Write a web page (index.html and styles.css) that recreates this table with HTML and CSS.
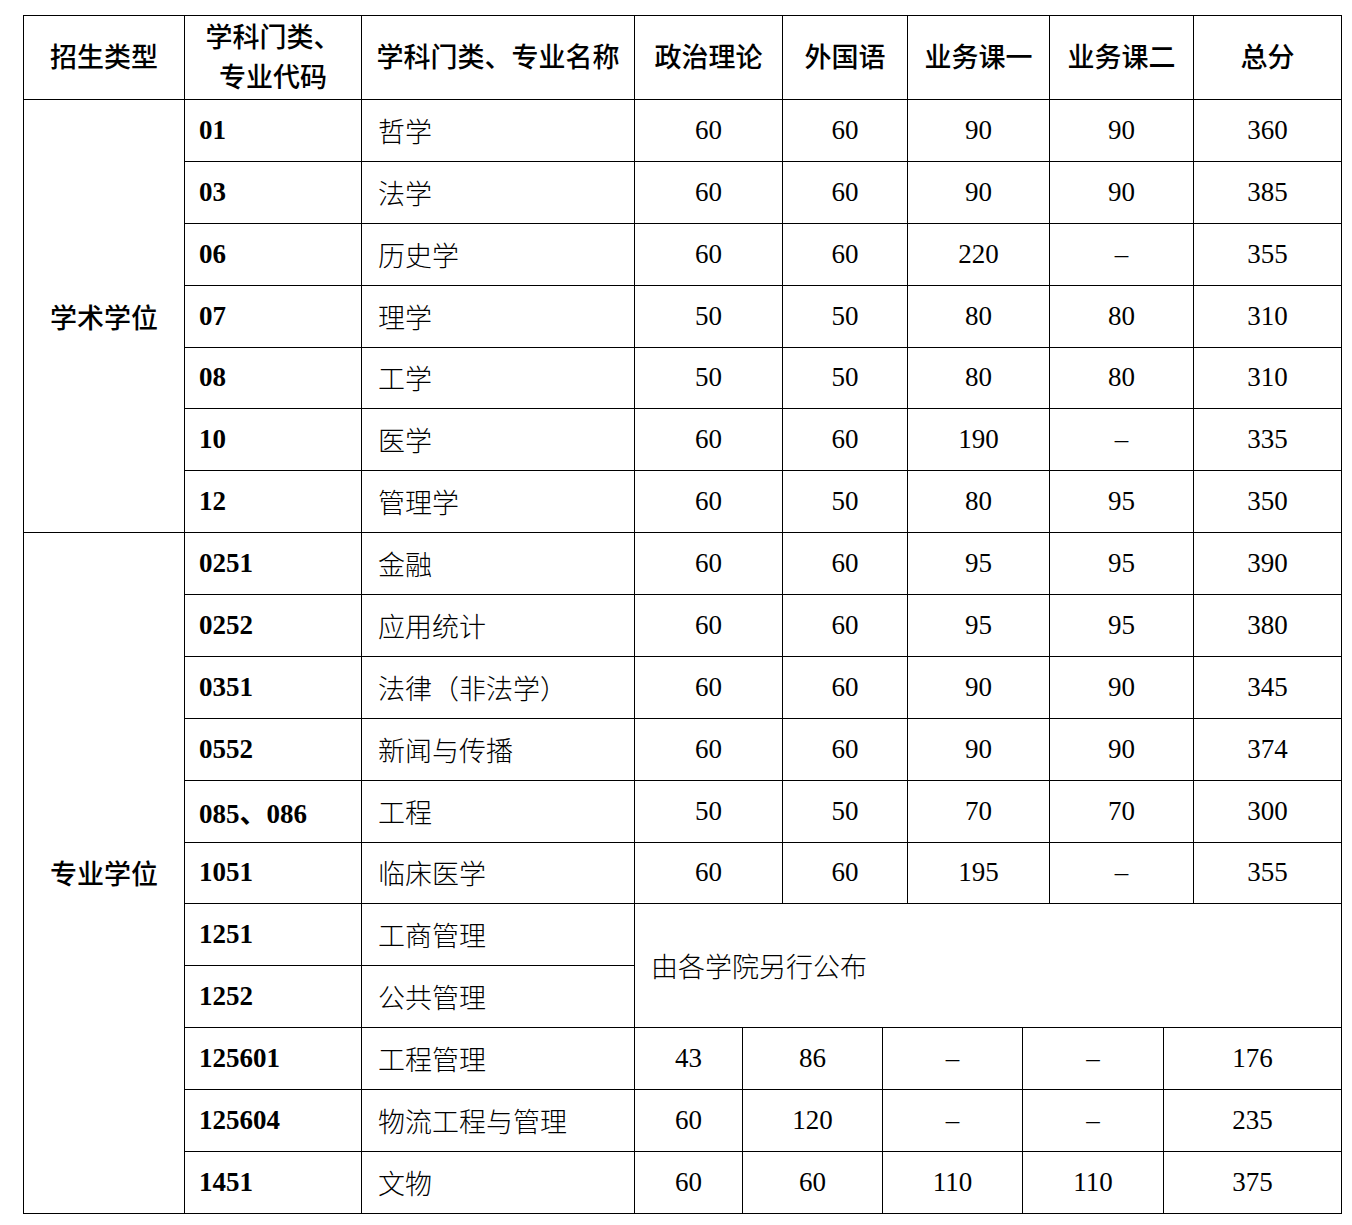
FILE: index.html
```html
<!DOCTYPE html>
<html lang="zh-CN">
<head>
<meta charset="utf-8">
<title>分数线</title>
<link rel="stylesheet" href="styles.css">
</head>
<body>
<table class="score">
  <colgroup>
    <col class="c1"><col class="c2"><col class="c3"><col class="c4"><col class="c5"><col class="c6">
    <col class="c7"><col class="c8"><col class="c9"><col class="c10"><col class="c11"><col class="c12">
  </colgroup>
  <thead>
    <tr class="head">
      <th>招生类型</th>
      <th class="two">学科门类、<br>专业代码</th>
      <th>学科门类、专业名称</th>
      <th colspan="2">政治理论</th>
      <th colspan="2">外国语</th>
      <th colspan="2">业务课一</th>
      <th colspan="2">业务课二</th>
      <th>总分</th>
    </tr>
  </thead>
  <tbody>
    <tr><td class="type" rowspan="7">学术学位</td><td class="code">01</td><td class="name">哲学</td><td colspan="2">60</td><td colspan="2">60</td><td colspan="2">90</td><td colspan="2">90</td><td>360</td></tr>
    <tr><td class="code">03</td><td class="name">法学</td><td colspan="2">60</td><td colspan="2">60</td><td colspan="2">90</td><td colspan="2">90</td><td>385</td></tr>
    <tr><td class="code">06</td><td class="name">历史学</td><td colspan="2">60</td><td colspan="2">60</td><td colspan="2">220</td><td colspan="2">–</td><td>355</td></tr>
    <tr><td class="code">07</td><td class="name">理学</td><td colspan="2">50</td><td colspan="2">50</td><td colspan="2">80</td><td colspan="2">80</td><td>310</td></tr>
    <tr><td class="code">08</td><td class="name">工学</td><td colspan="2">50</td><td colspan="2">50</td><td colspan="2">80</td><td colspan="2">80</td><td>310</td></tr>
    <tr><td class="code">10</td><td class="name">医学</td><td colspan="2">60</td><td colspan="2">60</td><td colspan="2">190</td><td colspan="2">–</td><td>335</td></tr>
    <tr><td class="code">12</td><td class="name">管理学</td><td colspan="2">60</td><td colspan="2">50</td><td colspan="2">80</td><td colspan="2">95</td><td>350</td></tr>
    <tr><td class="type" rowspan="11">专业学位</td><td class="code">0251</td><td class="name">金融</td><td colspan="2">60</td><td colspan="2">60</td><td colspan="2">95</td><td colspan="2">95</td><td>390</td></tr>
    <tr><td class="code">0252</td><td class="name">应用统计</td><td colspan="2">60</td><td colspan="2">60</td><td colspan="2">95</td><td colspan="2">95</td><td>380</td></tr>
    <tr><td class="code">0351</td><td class="name">法律（非法学）</td><td colspan="2">60</td><td colspan="2">60</td><td colspan="2">90</td><td colspan="2">90</td><td>345</td></tr>
    <tr><td class="code">0552</td><td class="name">新闻与传播</td><td colspan="2">60</td><td colspan="2">60</td><td colspan="2">90</td><td colspan="2">90</td><td>374</td></tr>
    <tr><td class="code">085、086</td><td class="name">工程</td><td colspan="2">50</td><td colspan="2">50</td><td colspan="2">70</td><td colspan="2">70</td><td>300</td></tr>
    <tr><td class="code">1051</td><td class="name">临床医学</td><td colspan="2">60</td><td colspan="2">60</td><td colspan="2">195</td><td colspan="2">–</td><td>355</td></tr>
    <tr><td class="code">1251</td><td class="name">工商管理</td><td class="note" colspan="9" rowspan="2">由各学院另行公布</td></tr>
    <tr><td class="code">1252</td><td class="name">公共管理</td></tr>
    <tr><td class="code">125601</td><td class="name">工程管理</td><td>43</td><td colspan="2">86</td><td colspan="2">–</td><td colspan="2">–</td><td colspan="2">176</td></tr>
    <tr><td class="code">125604</td><td class="name">物流工程与管理</td><td>60</td><td colspan="2">120</td><td colspan="2">–</td><td colspan="2">–</td><td colspan="2">235</td></tr>
    <tr><td class="code">1451</td><td class="name">文物</td><td>60</td><td colspan="2">60</td><td colspan="2">110</td><td colspan="2">110</td><td colspan="2">375</td></tr>
  </tbody>
</table>
</body>
</html>
```
FILE: styles.css
```css
html, body {
  background: #ffffff;
}
body {
  margin: 0;
  padding: 15px 0 0 23px;
  font-family: "Liberation Serif", "Noto Sans CJK SC", serif;
  color: #000000;
}
.score {
  border-collapse: collapse;
  table-layout: fixed;
  width: 1318px;
  font-size: 27px;
}
.c1 { width: 161px; }
.c2 { width: 177px; }
.c3 { width: 273px; }
.c4 { width: 108px; }
.c5 { width: 40px; }
.c6 { width: 100px; }
.c7 { width: 25px; }
.c8 { width: 115px; }
.c9 { width: 27px; }
.c10 { width: 114px; }
.c11 { width: 30px; }
.c12 { width: 148px; }
.score th,
.score td {
  border: 1px solid #000000;
  padding: 0;
  text-align: center;
  vertical-align: middle;
  white-space: nowrap;
  overflow: hidden;
}
.head {
  height: 84px;
}
.score th {
  font-weight: 500;
  line-height: 40px;
}
.score tbody tr {
  height: 61.88px;
}
.score td {
  font-weight: 300;
}
.score td.code {
  text-align: left;
  padding-left: 14px;
  font-weight: 700;
}
.score td.name,
.score td.note {
  text-align: left;
  padding-left: 16px;
}
.score td.type {
  font-weight: 500;
}
```
